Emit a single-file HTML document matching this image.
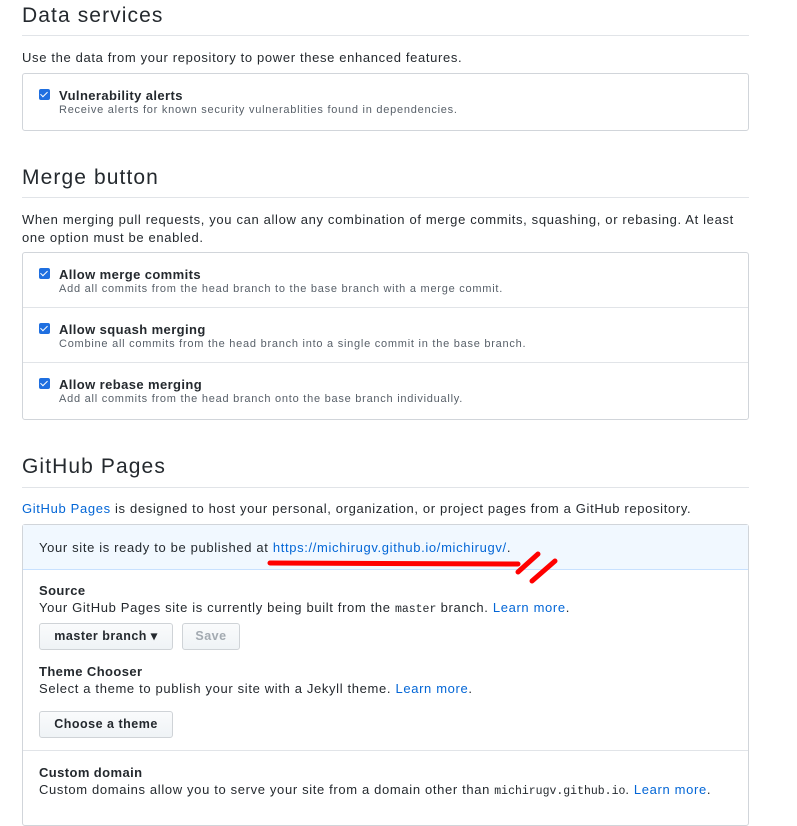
<!DOCTYPE html>
<html><head><style>
body{margin:0;width:797px;height:800px;background:#fff;font-family:"Liberation Sans",sans-serif;color:#24292e;position:relative;overflow:hidden}
.a{position:absolute;white-space:nowrap}
h2{position:absolute;margin:0;font-weight:400;font-size:21px;letter-spacing:1.1px;left:22px;white-space:nowrap}
.hr{position:absolute;left:22px;width:727px;height:1px;background:#e1e4e8}
.p{font-size:13px;letter-spacing:0.65px}
.box{position:absolute;left:22px;width:725px;border:1px solid #d1d5da;border-radius:3px}
.cb{position:absolute;left:39px;width:11px;height:11px;background:#1f6fe0;border-radius:2px}
.cb:after{content:"";position:absolute;left:3px;top:1px;width:3px;height:6px;border:solid #fff;border-width:0 1.5px 1.5px 0;transform:rotate(45deg)}
.t{font-size:13px;font-weight:bold;left:59px;letter-spacing:0.4px}
.d{font-size:11px;color:#586069;left:59px;letter-spacing:0.75px}
.sep{position:absolute;left:23px;width:725px;height:1px;background:#e1e4e8}
.l{color:#0366d6}
.btn{position:absolute;height:25px;border:1px solid #cfd3d7;border-radius:3px;background:linear-gradient(#fafbfc,#eff3f6);font-size:12.5px;font-weight:bold;line-height:25px;text-align:center;letter-spacing:0.5px}
code{font-family:"Liberation Mono",monospace;font-size:11.5px;letter-spacing:0}
</style></head><body>
<h2 style="top:4px">Data services</h2>
<div class="hr" style="top:35px"></div>
<div class="a p" style="left:22px;top:50px">Use the data from your repository to power these enhanced features.</div>
<div class="box" style="top:73px;height:56px"></div>
<div class="cb" style="top:89px"></div>
<div class="a t" style="top:88px">Vulnerability alerts</div>
<div class="a d" style="top:104px">Receive alerts for known security vulnerablities found in dependencies.</div>

<h2 style="top:166px">Merge button</h2>
<div class="hr" style="top:197px"></div>
<div class="a p" style="left:22px;top:212px">When merging pull requests, you can allow any combination of merge commits, squashing, or rebasing. At least</div>
<div class="a p" style="left:22px;top:230px">one option must be enabled.</div>
<div class="box" style="top:252px;height:166px"></div>
<div class="sep" style="top:307px"></div>
<div class="sep" style="top:362px"></div>
<div class="cb" style="top:268px"></div>
<div class="a t" style="top:267px">Allow merge commits</div>
<div class="a d" style="top:283px">Add all commits from the head branch to the base branch with a merge commit.</div>
<div class="cb" style="top:323px"></div>
<div class="a t" style="top:322px">Allow squash merging</div>
<div class="a d" style="top:338px">Combine all commits from the head branch into a single commit in the base branch.</div>
<div class="cb" style="top:378px"></div>
<div class="a t" style="top:377px">Allow rebase merging</div>
<div class="a d" style="top:393px">Add all commits from the head branch onto the base branch individually.</div>

<h2 style="top:455px">GitHub Pages</h2>
<div class="hr" style="top:487px"></div>
<div class="a p" style="left:22px;top:501px"><span class="l">GitHub Pages</span> is designed to host your personal, organization, or project pages from a GitHub repository.</div>
<div class="box" style="top:524px;height:300px"></div>
<div class="a" style="left:23px;top:525px;width:725px;height:44px;background:#f1f8ff;border-bottom:1px solid #c8e1ff"></div>
<div class="a p" style="left:39px;top:540px">Your site is ready to be published at <span class="l">https://michirugv.github.io/michirugv/</span>.</div>
<svg class="a" style="left:0;top:0" width="797" height="800"><g stroke="#f00" stroke-width="5" stroke-linecap="round" fill="none"><path d="M270 563 L518 564"/><path d="M518 572 L538 554"/><path d="M532 581 L555 561"/></g></svg>
<div class="a t" style="left:39px;top:583px">Source</div>
<div class="a p" style="left:39px;top:600px">Your GitHub Pages site is currently being built from the <code>master</code> branch. <span class="l">Learn more</span>.</div>
<div class="btn" style="left:39px;top:623px;width:132px">master branch ▾</div>
<div class="btn" style="left:182px;top:623px;width:56px;color:#a3aab1">Save</div>
<div class="a t" style="left:39px;top:664px">Theme Chooser</div>
<div class="a p" style="left:39px;top:681px">Select a theme to publish your site with a Jekyll theme. <span class="l">Learn more</span>.</div>
<div class="btn" style="left:39px;top:711px;width:132px">Choose a theme</div>
<div class="sep" style="top:750px"></div>
<div class="a t" style="left:39px;top:765px">Custom domain</div>
<div class="a p" style="left:39px;top:782px">Custom domains allow you to serve your site from a domain other than <code>michirugv.github.io</code>. <span class="l">Learn more</span>.</div>
</body></html>
